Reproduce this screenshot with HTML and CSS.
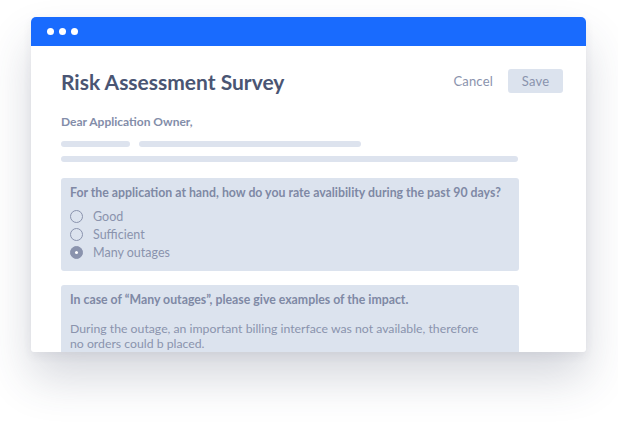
FILE: index.html
```html
<!DOCTYPE html>
<html lang="en">
<head>
<meta charset="utf-8">
<title>Risk Assessment Survey</title>
<link rel="stylesheet" href="styles.css">
</head>
<body>
  <div class="window">
    <div class="titlebar">
      <span class="dot"></span><span class="dot"></span><span class="dot"></span>
    </div>
    <div class="content">
      <div class="header">
        <h1 class="title">Risk Assessment Survey</h1>
        <div class="actions">
          <span class="cancel">Cancel</span>
          <span class="save">Save</span>
        </div>
      </div>
      <div class="body">
        <p class="greeting">Dear Application Owner,</p>
        <div class="bars">
          <div class="bar-row">
            <span class="bar bar-a"></span>
            <span class="bar bar-b"></span>
          </div>
          <span class="bar bar-c"></span>
        </div>
        <div class="card card-q">
          <p class="question">For the application at hand, how do you rate avalibility during the past 90 days?</p>
          <ul class="options">
            <li class="option"><span class="radio"></span>Good</li>
            <li class="option"><span class="radio"></span>Sufficient</li>
            <li class="option"><span class="radio checked"></span>Many outages</li>
          </ul>
        </div>
        <div class="card card-t">
          <p class="question">In case of “Many outages”, please give examples of the impact.</p>
          <p class="answer">During the outage, an important billing interface was not available, therefore<br>no orders could b placed.</p>
        </div>
      </div>
    </div>
  </div>
</body>
</html>
```
FILE: styles.css
```css
* { box-sizing: border-box; }
html, body { margin: 0; background: #ffffff; }
html { height: 100%; }
body {
  min-height: 100%;
  padding: 17px 0 0 31px;
  font-family: "Lato", "Inter", "Liberation Sans", sans-serif;
}
.window {
  width: 555px;
  height: 335px;
  background: #ffffff;
  border-radius: 5px 5px 3px 3px;
  overflow: hidden;
  box-shadow: 0 26px 46px rgba(50, 60, 90, 0.2), 0 4px 10px rgba(50, 60, 90, 0.07);
  display: flex;
  flex-direction: column;
}
.titlebar {
  height: 29px;
  background: #196bfe;
  display: flex;
  align-items: center;
  gap: 5px;
  padding-left: 16px;
  flex-shrink: 0;
}
.dot {
  width: 7px;
  height: 7px;
  border-radius: 50%;
  background: #ffffff;
}
.content {
  padding: 23px 23px 0 30px;
  flex: 1;
  overflow: hidden;
}
.header {
  display: flex;
  align-items: center;
  justify-content: space-between;
  height: 24px;
}
.title {
  margin: 0;
  font-size: 21px;
  font-weight: 700;
  color: #4a5573;
}
.actions {
  display: flex;
  align-items: center;
  gap: 15px;
}
.cancel {
  font-size: 13px;
  color: #8a93ad;
  letter-spacing: 0.2px;
}
.save {
  width: 55px;
  height: 24px;
  border-radius: 3px;
  background: #dce3ee;
  color: #8a93ad;
  font-size: 13px;
  letter-spacing: 0.2px;
  display: flex;
  align-items: center;
  justify-content: center;
}
.body {
  width: 458px;
}
.greeting {
  margin: 21px 0 0;
  font-size: 12px;
  font-weight: 700;
  color: #838da9;
  line-height: 16px;
}
.bars {
  margin-top: 11px;
  display: flex;
  flex-direction: column;
  gap: 9px;
}
.bar-row {
  display: flex;
  gap: 9px;
}
.bar {
  display: block;
  height: 6px;
  border-radius: 3px;
  background: #dde3ee;
}
.bar-a { width: 69px; }
.bar-b { width: 222px; }
.bar-c { width: 457px; }
.card {
  background: #dce3ee;
  border-radius: 3px;
  padding: 7px 9px 0;
}
.card-q {
  margin-top: 16px;
  height: 93px;
}
.card-t {
  margin-top: 14px;
  height: 90px;
}
.question {
  margin: 0;
  font-size: 12.3px;
  font-weight: 700;
  color: #7f89a5;
  line-height: 16px;
}
.options {
  list-style: none;
  margin: 8px 0 0;
  padding: 0;
  display: flex;
  flex-direction: column;
  gap: 3px;
}
.option {
  display: flex;
  align-items: center;
  gap: 10px;
  height: 15px;
  font-size: 12.5px;
  color: #8a93ad;
}
.radio {
  width: 13px;
  height: 13px;
  border-radius: 50%;
  border: 1.7px solid #8a93ad;
  flex-shrink: 0;
  position: relative;
}
.radio.checked {
  background: #8a93ad;
}
.radio.checked::after {
  content: "";
  position: absolute;
  left: 50%;
  top: 50%;
  width: 3px;
  height: 3px;
  margin: -1.5px 0 0 -1.5px;
  border-radius: 50%;
  background: #ffffff;
}
.answer {
  margin: 13px 0 0;
  font-size: 12.25px;
  color: #8a93ad;
  line-height: 15px;
}
```
